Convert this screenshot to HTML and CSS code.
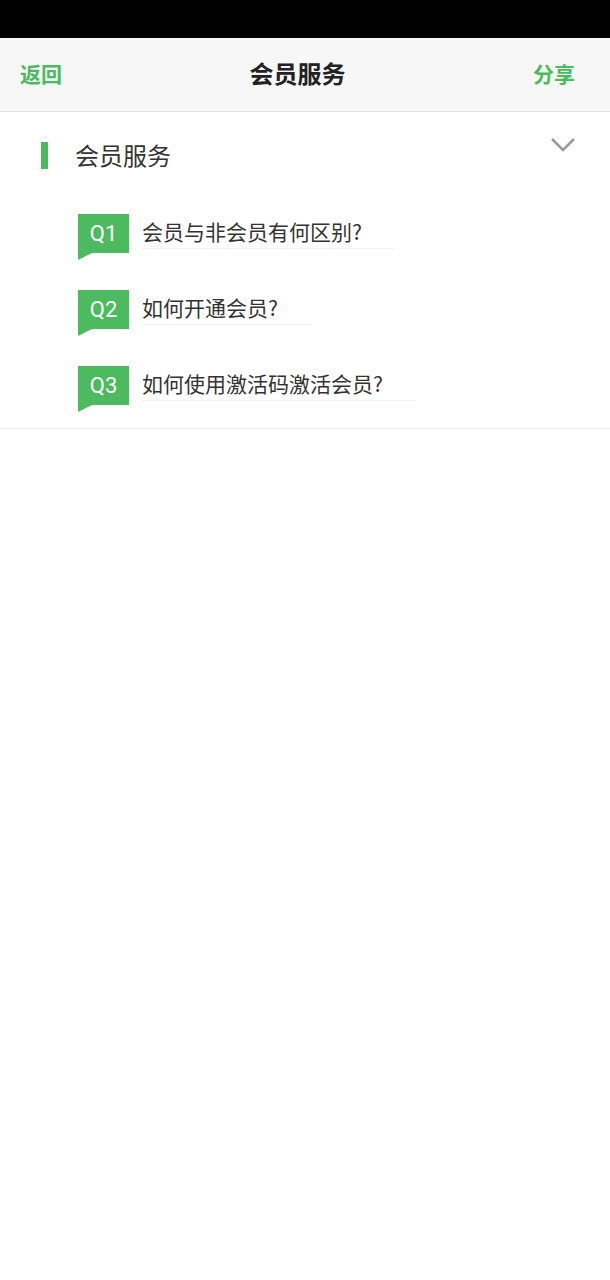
FILE: index.html
```html
<!DOCTYPE html>
<html lang="zh-CN">
<head>
    <meta charset="UTF-8">
    <meta name="viewport" content="width=device-width, initial-scale=1.0">
    <title>会员服务</title>
    <link rel="stylesheet" href="styles.css">
</head>
<body>
    <div class="status-bar"></div>

    <div class="nav-bar">
        <a class="nav-link">返回</a>
        <h1 class="nav-title">会员服务</h1>
        <a class="nav-link">分享</a>
    </div>

    <div class="section">
        <div class="section-head">
            <div class="section-title">
                <span class="mark"></span>
                <span>会员服务</span>
            </div>
            <svg class="chevron" width="26" height="16" viewBox="0 0 26 16">
                <polyline points="2,2 13,13 24,2" fill="none" stroke="#9a9a9a" stroke-width="2.6"/>
            </svg>
        </div>

        <ul class="faq">
            <li class="faq-item">
                <span class="badge">Q1</span>
                <span class="question">会员与非会员有何区别?</span>
            </li>
            <li class="faq-item">
                <span class="badge">Q2</span>
                <span class="question">如何开通会员?</span>
            </li>
            <li class="faq-item">
                <span class="badge">Q3</span>
                <span class="question">如何使用激活码激活会员?</span>
            </li>
        </ul>
    </div>
</body>
</html>
```

FILE: styles.css
```css
body {
    margin: 0;
    background: #fff;
    font-family: "Noto Sans CJK SC", "Noto Sans", sans-serif;
    color: #333;
}
.status-bar {
    height: 38px;
    background: #000;
}
.nav-bar {
    height: 73px;
    background: #f7f7f7;
    border-bottom: 1px solid #e2e2e2;
    display: flex;
    align-items: center;
    justify-content: space-between;
    padding: 0 35px 0 20px;
}
.nav-link {
    color: #4cbb5f;
    font-size: 21px;
    font-weight: bold;
    line-height: 30px;
    margin-bottom: 3px;
}
.nav-title {
    margin: 0 0 3px;
    font-size: 24px;
    line-height: 30px;
    font-weight: bold;
    color: #222;
}
.section {
    border-bottom: 1px solid #ececec;
    padding-bottom: 16px;
}
.section-head {
    display: flex;
    justify-content: space-between;
    align-items: flex-start;
    padding: 25px 34px 0 41px;
}
.section-title {
    display: flex;
    align-items: center;
    gap: 27px;
    margin-top: 5px;
    font-size: 24px;
    line-height: 27px;
    color: #333;
}
.section-title span:last-child {
    margin-top: -3px;
}
.mark {
    width: 7px;
    height: 27px;
    background: #4cbb5f;
}
.chevron {
    display: block;
}
.faq {
    list-style: none;
    margin: 0;
    padding: 45px 0 0 78px;
}
.faq-item {
    display: flex;
    align-items: flex-start;
    margin-bottom: 30px;
}
.faq-item:last-child {
    margin-bottom: 0;
}
.badge {
    position: relative;
    width: 51px;
    height: 39px;
    margin-bottom: 7px;
    background: #4cbb5f;
    color: #fff;
    font-family: Roboto, "Noto Sans", sans-serif;
    font-size: 22px;
    line-height: 39px;
    text-align: center;
    flex-shrink: 0;
}
.badge::after {
    content: "";
    position: absolute;
    left: 0;
    top: 39px;
    border-top: 7px solid #4cbb5f;
    border-right: 14px solid transparent;
}
.question {
    margin-left: 13px;
    padding-right: 33px;
    font-size: 21px;
    line-height: 34px;
    border-bottom: 1px solid #f0f0f0;
    color: #333;
}
```
